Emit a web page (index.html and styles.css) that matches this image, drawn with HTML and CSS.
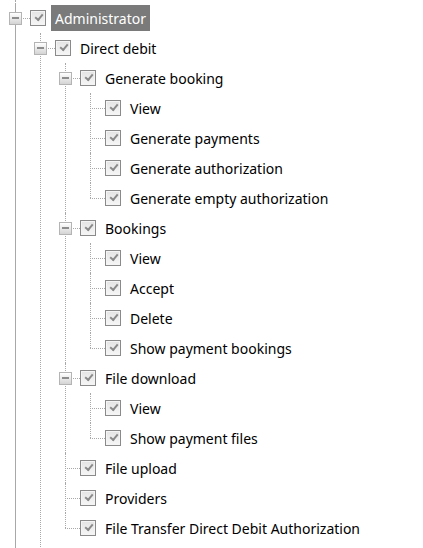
FILE: index.html
```html
<!DOCTYPE html>
<html>
<head>
<meta charset="utf-8">
<link rel="stylesheet" href="styles.css">
</head>
<body>
<div class="tree-wrap">
<ul class="tree">
  <li class="node">
    <div class="row"><span class="slot"><span class="exp"></span></span><span class="cb"></span><span class="label selected">Administrator</span></div>
    <ul class="children">
      <li class="node more-below">
        <div class="row"><span class="slot"><span class="exp"></span></span><span class="cb"></span><span class="label">Direct debit</span></div>
        <ul class="children">
          <li class="node">
            <div class="row"><span class="slot"><span class="exp"></span></span><span class="cb"></span><span class="label">Generate booking</span></div>
            <ul class="children">
              <li class="node"><div class="row"><span class="slot"></span><span class="cb"></span><span class="label">View</span></div></li>
              <li class="node"><div class="row"><span class="slot"></span><span class="cb"></span><span class="label">Generate payments</span></div></li>
              <li class="node"><div class="row"><span class="slot"></span><span class="cb"></span><span class="label">Generate authorization</span></div></li>
              <li class="node last"><div class="row"><span class="slot"></span><span class="cb"></span><span class="label">Generate empty authorization</span></div></li>
            </ul>
          </li>
          <li class="node">
            <div class="row"><span class="slot"><span class="exp"></span></span><span class="cb"></span><span class="label">Bookings</span></div>
            <ul class="children">
              <li class="node"><div class="row"><span class="slot"></span><span class="cb"></span><span class="label">View</span></div></li>
              <li class="node"><div class="row"><span class="slot"></span><span class="cb"></span><span class="label">Accept</span></div></li>
              <li class="node"><div class="row"><span class="slot"></span><span class="cb"></span><span class="label">Delete</span></div></li>
              <li class="node last"><div class="row"><span class="slot"></span><span class="cb"></span><span class="label">Show payment bookings</span></div></li>
            </ul>
          </li>
          <li class="node">
            <div class="row"><span class="slot"><span class="exp"></span></span><span class="cb"></span><span class="label">File download</span></div>
            <ul class="children">
              <li class="node"><div class="row"><span class="slot"></span><span class="cb"></span><span class="label">View</span></div></li>
              <li class="node last"><div class="row"><span class="slot"></span><span class="cb"></span><span class="label">Show payment files</span></div></li>
            </ul>
          </li>
          <li class="node"><div class="row"><span class="slot"></span><span class="cb"></span><span class="label">File upload</span></div></li>
          <li class="node"><div class="row"><span class="slot"></span><span class="cb"></span><span class="label">Providers</span></div></li>
          <li class="node last"><div class="row"><span class="slot"></span><span class="cb"></span><span class="label">File Transfer Direct Debit Authorization</span></div></li>
        </ul>
      </li>
    </ul>
  </li>
</ul>
</div>
</body>
</html>
```

FILE: styles.css
```css
html, body {
  margin: 0;
  padding: 0;
  background: #ffffff;
  overflow: hidden;
}
body {
  font-family: "Noto Sans", "Open Sans", sans-serif;
  font-size: 14px;
  color: #000;
}
.tree-wrap {
  position: relative;
  height: 548px;
  overflow: hidden;
  padding: 3px 0 0 3px;
  box-sizing: border-box;
}
.tree-wrap::before {
  content: "";
  position: absolute;
  left: 15px;
  top: 0;
  bottom: 0;
  border-left: 1px dotted #a8a8a8;
}
.tree, .children {
  list-style: none;
  margin: 0;
  padding: 0;
}
.children {
  padding-left: 25px;
}
.node {
  position: relative;
}
.node::before {
  content: "";
  position: absolute;
  left: 12px;
  top: 0;
  bottom: 0;
  border-left: 1px dotted #a8a8a8;
}
.node.last::before {
  bottom: auto;
  height: 15px;
}
.node.more-below {
  padding-bottom: 12px;
}
.row {
  position: relative;
  display: flex;
  align-items: center;
  height: 30px;
}
.row::before {
  content: "";
  position: absolute;
  left: 12px;
  width: 15px;
  top: 15px;
  border-top: 1px dotted #a8a8a8;
}
.slot {
  position: relative;
  z-index: 1;
  width: 25px;
  height: 30px;
  flex: none;
  display: flex;
  align-items: center;
}
.exp {
  position: relative;
  margin-left: 6px;
  width: 13px;
  height: 13px;
  box-sizing: border-box;
  border: 1px solid #b4b4b4;
  background: linear-gradient(#ffffff, #d4d4d4);
}
.exp::after {
  content: "";
  position: absolute;
  left: 2px;
  right: 2px;
  top: 4px;
  height: 2px;
  background: #8c8c8c;
}
.cb {
  position: relative;
  z-index: 1;
  flex: none;
  margin-left: 2px;
  width: 16px;
  height: 16px;
  box-sizing: border-box;
  border: 1px solid #8a8a8a;
  box-shadow: inset 0 0 0 1px #f4f4f4;
  background: linear-gradient(#e4e4e4, #f6f6f6);
}
.cb::after {
  content: "";
  position: absolute;
  left: 4px;
  top: 3px;
  width: 6px;
  height: 3px;
  border-left: 2px solid #8a8a8a;
  border-bottom: 2px solid #8a8a8a;
  transform: rotate(-50deg);
  transform-origin: center;
}
.label {
  margin-left: 9px;
  margin-top: 2px;
  white-space: nowrap;
  line-height: 26px;
}
.label.selected {
  margin-left: 5px;
  margin-top: 0;
  padding: 2px 4px 0;
  box-sizing: border-box;
  height: 26px;
  line-height: 24px;
  background: #7a7a7a;
  color: #ffffff;
}
```
